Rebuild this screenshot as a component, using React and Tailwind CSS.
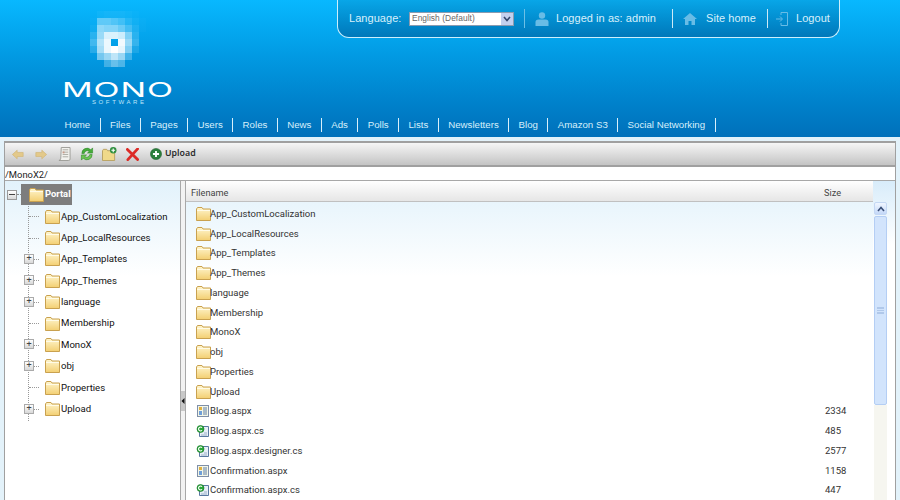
import React from "react";

const navItems = ["Home", "Files", "Pages", "Users", "Roles", "News", "Ads", "Polls", "Lists", "Newsletters", "Blog", "Amazon S3", "Social Networking"];

const treeItems = [
  { name: "App_CustomLocalization" },
  { name: "App_LocalResources" },
  { name: "App_Templates", more: true },
  { name: "App_Themes", more: true },
  { name: "language", more: true },
  { name: "Membership" },
  { name: "MonoX", more: true },
  { name: "obj", more: true },
  { name: "Properties" },
  { name: "Upload", more: true },
];

const files = [
  { name: "App_CustomLocalization", type: "folder" },
  { name: "App_LocalResources", type: "folder" },
  { name: "App_Templates", type: "folder" },
  { name: "App_Themes", type: "folder" },
  { name: "language", type: "folder" },
  { name: "Membership", type: "folder" },
  { name: "MonoX", type: "folder" },
  { name: "obj", type: "folder" },
  { name: "Properties", type: "folder" },
  { name: "Upload", type: "folder" },
  { name: "Blog.aspx", type: "aspx", size: 2334 },
  { name: "Blog.aspx.cs", type: "cs", size: 485 },
  { name: "Blog.aspx.designer.cs", type: "cs", size: 2577 },
  { name: "Confirmation.aspx", type: "aspx", size: 1158 },
  { name: "Confirmation.aspx.cs", type: "cs", size: 447 },
];

// logo pixels, 7px cells, white opacity
const logoCols = [90, 97, 104, 111, 118, 125, 132, 139];
const logoRows = [
  [11, [0, 0.04, 0.06, 0.06, 0.06, 0.04, 0.02, 0]],
  [18, [0.02, 0.36, 0.36, 0.3, 0.24, 0.12, 0.05, 0.02]],
  [25, [0.05, 0.55, 0.5, 0.5, 0.4, 0.25, 0.1, 0.02]],
  [32, [0.15, 0.6, 0.85, 0.85, 0.8, 0.5, 0.15, 0]],
  [39, [0.25, 0.7, 0.92, 0, 0.95, 0.6, 0.2, 0]],
  [46, [0.15, 0.65, 0.92, 1, 0.9, 0.5, 0.1, 0]],
  [53, [0, 0.45, 0.6, 0.75, 0.6, 0.25, 0, 0]],
  [60, [0, 0, 0.25, 0.4, 0.3, 0, 0, 0]],
];

function LogoPixels() {
  return (
    <svg width="70" height="64" viewBox="83 8 70 64" className="block">
      {logoRows.map(([y, vals]) =>
        vals.map((v, i) => <rect key={`${y}-${i}`} x={logoCols[i]} y={y} width="7" height="7" fill="#fff" opacity={v} />)
      )}
    </svg>
  );
}

function Folder() {
  return (
    <svg width="15" height="14" viewBox="0 0 15 14" className="block shrink-0">
      <defs>
        <linearGradient id="fold" x1="0" y1="0" x2="0" y2="1">
          <stop offset="0" stopColor="#fff6cf" />
          <stop offset="1" stopColor="#f3cf72" />
        </linearGradient>
      </defs>
      <path d="M0.5 2 L1.5 0.5 H6 L7 2 H14.5 V13.5 H0.5 Z" fill="url(#fold)" stroke="#c9a14f" strokeWidth="1" />
      <path d="M1 3.5 H14" stroke="#fffbe8" strokeWidth="1" />
    </svg>
  );
}

function AspxIcon() {
  return (
    <svg width="14" height="14" viewBox="0 0 14 14" className="block shrink-0">
      <rect x="1.5" y="1.5" width="11" height="11" fill="#f4f6e6" stroke="#7f8fa8" />
      <rect x="3" y="3" width="3" height="3" fill="#e0b040" />
      <rect x="3" y="7" width="3" height="4" fill="#6f9fd8" />
      <path d="M7 4h4M7 6h4M7 8h4M7 10h4" stroke="#5f7fa8" strokeWidth="1" />
    </svg>
  );
}

function CsIcon() {
  return (
    <svg width="14" height="14" viewBox="0 0 14 14" className="block shrink-0">
      <path d="M3.5 2.5 H12.5 V12.5 H3.5 Z" fill="#e8eff8" stroke="#5878a0" />
      <path d="M5 11h6M8 9h3" stroke="#9ab0c8" />
      <circle cx="4.5" cy="5" r="3.5" fill="#28a838" stroke="#0f6f20" strokeWidth="0.6" />
      <path d="M6 3.6 A2 2 0 1 0 6 6.4" fill="none" stroke="#fff" strokeWidth="1.1" />
    </svg>
  );
}

function ToolbarIcons() {
  return (
    <>
      <svg width="12" height="11" viewBox="0 0 14 12" className="shrink-0">
        <path d="M0.5 6 L6 1 V3.6 H13 V8.4 H6 V11 Z" fill="#e3c98a" stroke="#d1b677" strokeWidth="0.8" />
      </svg>
      <svg width="12" height="11" viewBox="0 0 14 12" className="shrink-0 ml-[11px]">
        <path d="M13.5 6 L8 1 V3.6 H1 V8.4 H8 V11 Z" fill="#e3c98a" stroke="#d1b677" strokeWidth="0.8" />
      </svg>
      <svg width="13" height="14" viewBox="0 0 14 15" className="shrink-0 ml-[11px]">
        <path d="M3.5 0.5 H13 V13 Q13 14.5 11 14.5 H1 Q3 14 3 12 Z" fill="#f2f2ee" stroke="#9c9c96" />
        <path d="M5 3h6M5 5.5h6M5 8h6M5 10.5h6" stroke="#a8a8a0" />
        <rect x="5" y="4.8" width="2" height="2" fill="#c89a88" />
      </svg>
      <svg width="14" height="14" viewBox="0 0 15 15" className="shrink-0 ml-[9px]">
        <path d="M2 7 A5.5 5.5 0 0 1 11.5 3 L13.5 1 V6.5 H8 L10 4.6 A3.5 3.5 0 0 0 4.5 7 Z" fill="#47ad3c" stroke="#2c8428" strokeWidth="0.6" />
        <path d="M13 8 A5.5 5.5 0 0 1 3.5 12 L1.5 14 V8.5 H7 L5 10.4 A3.5 3.5 0 0 0 10.5 8 Z" fill="#6cc552" stroke="#2c8428" strokeWidth="0.6" />
      </svg>
      <svg width="15" height="14" viewBox="0 0 16 15" className="shrink-0 ml-[8px]">
        <path d="M0.5 4 L1.5 2.5 H5 L6 4 H13.5 V14.5 H0.5 Z" fill="#f0d98a" stroke="#b8a060" />
        <circle cx="12" cy="3.5" r="3.5" fill="#2f8f3f" />
        <path d="M10 3.5h4M12 1.5v4" stroke="#fff" strokeWidth="1.2" />
      </svg>
      <svg width="13" height="13" viewBox="0 0 14 14" className="shrink-0 ml-[9px]">
        <path d="M1.5 1.5 L12.5 12.5 M12.5 1 L2 12.5" stroke="#dc2a26" strokeWidth="3" strokeLinecap="round" />
      </svg>
      <svg width="12" height="12" viewBox="0 0 13 13" className="shrink-0 ml-[11px]">
        <circle cx="6.5" cy="6.5" r="6" fill="#2b7f3c" stroke="#1d5f2c" strokeWidth="0.6" />
        <path d="M3.2 6.5h6.6M6.5 3.2v6.6" stroke="#fff" strokeWidth="2" />
      </svg>
    </>
  );
}

export default function App() {
  return (
    <div className="w-[900px] h-[500px] overflow-hidden bg-white font-['Roboto',sans-serif] text-[#333]">
      {/* HEADER */}
      <header className="h-[137px] bg-gradient-to-b from-[#08b8ff] to-[#0070ba] flex flex-col">
        <div className="flex h-[113px]">
          {/* logo */}
          <div className="ml-[62px] w-[275px] flex flex-col items-start">
            <div className="ml-[21px] mt-[8px]">
              <LogoPixels />
            </div>
            <div className="mt-[11px] h-[14px] leading-[14px] w-[64px] text-white text-[20px] font-['Inter',sans-serif] font-normal scale-x-[1.7] origin-left tracking-[0.5px] whitespace-nowrap">
              MONO
            </div>
            <div className="ml-[30px] mt-[1px] leading-[8px] text-[6px] text-[#bfe6fa] tracking-[2.6px] font-['Liberation_Sans',sans-serif]">
              SOFTWARE
            </div>
          </div>

          {/* user panel */}
          <div className="w-[503px] h-[38px] flex items-center rounded-b-[12px] border border-t-0 border-[#cdeffc] bg-gradient-to-b from-[#08a6e8] to-[#0078ba] text-[11px] tracking-[0.05px] text-[#d8f0fb] font-['Liberation_Sans',sans-serif] pl-[11px]">
            <span className="w-[53px] whitespace-nowrap">Language:</span>
            <div className="ml-[7px] w-[105px] h-[14px] bg-white border border-[#8a9bb0] flex items-center justify-between text-[8.4px] text-[#666] pl-[2px] leading-none">
              <span>English (Default)</span>
              <span className="w-[12px] h-[12px] bg-[#c3d0ee] flex items-center justify-center">
                <svg width="8" height="6" viewBox="0 0 8 6"><path d="M1 1 L4 4.5 L7 1" fill="none" stroke="#34466c" strokeWidth="1.6" /></svg>
              </span>
            </div>
            <div className="ml-[10px] w-px h-[19px] bg-[#6cc0e6]" />
            <svg width="14" height="14" viewBox="0 0 14 14" className="ml-[10px] shrink-0">
              <circle cx="7" cy="3.5" r="3.2" fill="#68bce6" />
              <path d="M0.5 14 V10 Q0.5 7.5 3.5 7.5 H10.5 Q13.5 7.5 13.5 10 V14 Z" fill="#68bce6" />
            </svg>
            <span className="ml-[7px] w-[101px] whitespace-nowrap">Logged in as: admin</span>
            <div className="ml-[15px] w-px h-[19px] bg-[#cdeaf7]" />
            <svg width="14" height="12" viewBox="0 0 14 12" className="ml-[10px] shrink-0">
              <path d="M7 0 L14 6 H12 V12 H8.5 V8 H5.5 V12 H2 V6 H0 Z" fill="#68bce6" />
            </svg>
            <span className="ml-[9px] w-[50px] whitespace-nowrap">Site home</span>
            <div className="ml-[11px] w-px h-[19px] bg-[#cdeaf7]" />
            <svg width="12" height="14" viewBox="0 0 12 14" className="ml-[8px] shrink-0">
              <path d="M5 3 V0.5 H11.5 V13.5 H5 V11" fill="none" stroke="#68bce6" />
              <path d="M0 7 H6 M4 4.5 L6.5 7 L4 9.5" fill="none" stroke="#68bce6" />
            </svg>
            <span className="ml-[8px]">Logout</span>
          </div>
        </div>

        <nav className="ml-[55px] h-[14px] mt-[5px] flex items-center text-[9.7px] text-[#d8f0fb] font-['Liberation_Sans',sans-serif]">
          {navItems.map((item) => (
            <span key={item} className="px-[9.4px] h-[14px] leading-[14px] border-r border-[#d8f0fb] whitespace-nowrap">
              {item}
            </span>
          ))}
        </nav>
      </header>

      {/* FILE MANAGER */}
      <div className="h-[363px] bg-[#e3f2fa] pt-[4px] pl-[4px] pr-[4px]">
        <div className="h-full overflow-hidden border-x border-[#a0a0a0] bg-white flex flex-col">
          {/* toolbar */}
          <div className="h-[26px] shrink-0 border border-[#a0a0a0] border-l-0 border-r-0 border-t-2 border-b-2 bg-gradient-to-b from-[#f6f6f6] to-[#c4c4c4] flex items-center pl-[7px]">
            <ToolbarIcons />
            <span className="ml-[3px] text-[8.8px] font-['Noto_Sans',sans-serif] font-semibold text-[#2d2d2d]">Upload</span>
          </div>
          {/* path */}
          <div className="h-[14px] shrink-0 leading-[16px] border-b border-[#a8a8a8] text-[9.4px] text-[#222] whitespace-nowrap">
            /MonoX2/
          </div>

          <div className="flex-1 flex min-h-0">
            {/* tree */}
            <div className="w-[175px] shrink-0 bg-gradient-to-b from-[#e2f2fb] to-white to-[30%] pt-[2px]">
              <div className="flex items-center h-[23px]">
                <span className="ml-[2px] w-[10px] h-[10px] border border-[#999] bg-gradient-to-b from-white to-[#d8d8d8] flex items-center justify-center">
                  <span className="w-[6px] h-px bg-[#444]" />
                </span>
                <span className="w-[4px] border-t border-dotted border-[#888]" />
                <span className="flex items-center gap-[1px] h-[21px] w-[51px] pl-[8px] bg-[#7d7d7d] text-white text-[9.4px] font-bold">
                  <Folder />
                  Portal
                </span>
              </div>
              <div className="ml-[23px] border-l border-dotted border-[#999] h-[215px]">
                {treeItems.map((t) => (
                  <div key={t.name} className="relative h-[21.4px] flex items-center">
                    {t.more && (
                      <span className="absolute -left-[5px] top-[5px] w-[10px] h-[10px] border border-[#aaa] bg-gradient-to-b from-white to-[#d8d8d8] flex items-center justify-center text-[9px] leading-none text-[#444]">
                        +
                      </span>
                    )}
                    <span className="w-[10px] border-t border-dotted border-[#999]" />
                    <span className="ml-[6px]"><Folder /></span>
                    <span className="ml-[1px] text-[9.6px] text-[#111] whitespace-nowrap">{t.name}</span>
                  </div>
                ))}
              </div>
            </div>

            {/* splitter */}
            <div className="w-[6px] shrink-0 border-x border-[#a8a8a8] bg-[#f2f2f2] flex items-start">
              <svg width="4" height="20" viewBox="0 0 4 20" className="mt-[210px]">
                <rect width="4" height="20" fill="#c8c8c8" />
                <path d="M3.5 7 L0.5 10 L3.5 13 Z" fill="#111" />
              </svg>
            </div>

            {/* file list */}
            <div className="w-[687px] shrink-0 flex flex-col bg-gradient-to-b from-[#e2f2fb] to-white to-[30%]">
              <div className="h-[21px] shrink-0 pt-[3px] bg-gradient-to-b from-white to-[#e6e6e6] border-b border-[#c0c0c0] flex items-center text-[9.2px] text-[#444] pl-[5px]">
                <span className="flex-1">Filename</span>
                <span className="w-[49px]">Size</span>
              </div>
              <div className="pt-[2px]">
                {files.map((f) => (
                  <div key={f.name} className="h-[19.75px] flex items-center text-[9.5px] text-[#333]">
                    <span className="ml-[10px] w-[14px] flex justify-start">
                      {f.type === "folder" ? <Folder /> : f.type === "aspx" ? <AspxIcon /> : <CsIcon />}
                    </span>
                    <span className="flex-1 whitespace-nowrap">{f.name}</span>
                    <span className="w-[48px]">{f.size}</span>
                  </div>
                ))}
              </div>
            </div>

            {/* scrollbar */}
            <div className="flex-1 bg-gradient-to-b from-[#d8ecfa] to-white to-[20%] pl-[1px] pt-[21px]">
              <div className="w-[13px] h-[13px] rounded-[2px] border border-[#c4d8f4] bg-gradient-to-b from-[#f0f6ff] to-[#c4d8f8] flex items-center justify-center">
                <svg width="8" height="6" viewBox="0 0 8 6"><path d="M1 5 L4 1.5 L7 5" fill="none" stroke="#3a4f78" strokeWidth="1.6" /></svg>
              </div>
              <div className="w-[13px] h-[189px] mt-[1px] rounded-[2px] border border-[#b4cef4] bg-[#d2e4fc] flex items-center justify-center">
                <span className="w-[7px] h-[7px] border-y border-[#b0c8ea] bg-[linear-gradient(#b0c8ea_1px,transparent_1px)] bg-[length:100%_2px]" />
              </div>
              <div className="w-[13px] h-[100px] bg-[#f6f6f0]" />
            </div>
          </div>
        </div>
      </div>
    </div>
  );
}
